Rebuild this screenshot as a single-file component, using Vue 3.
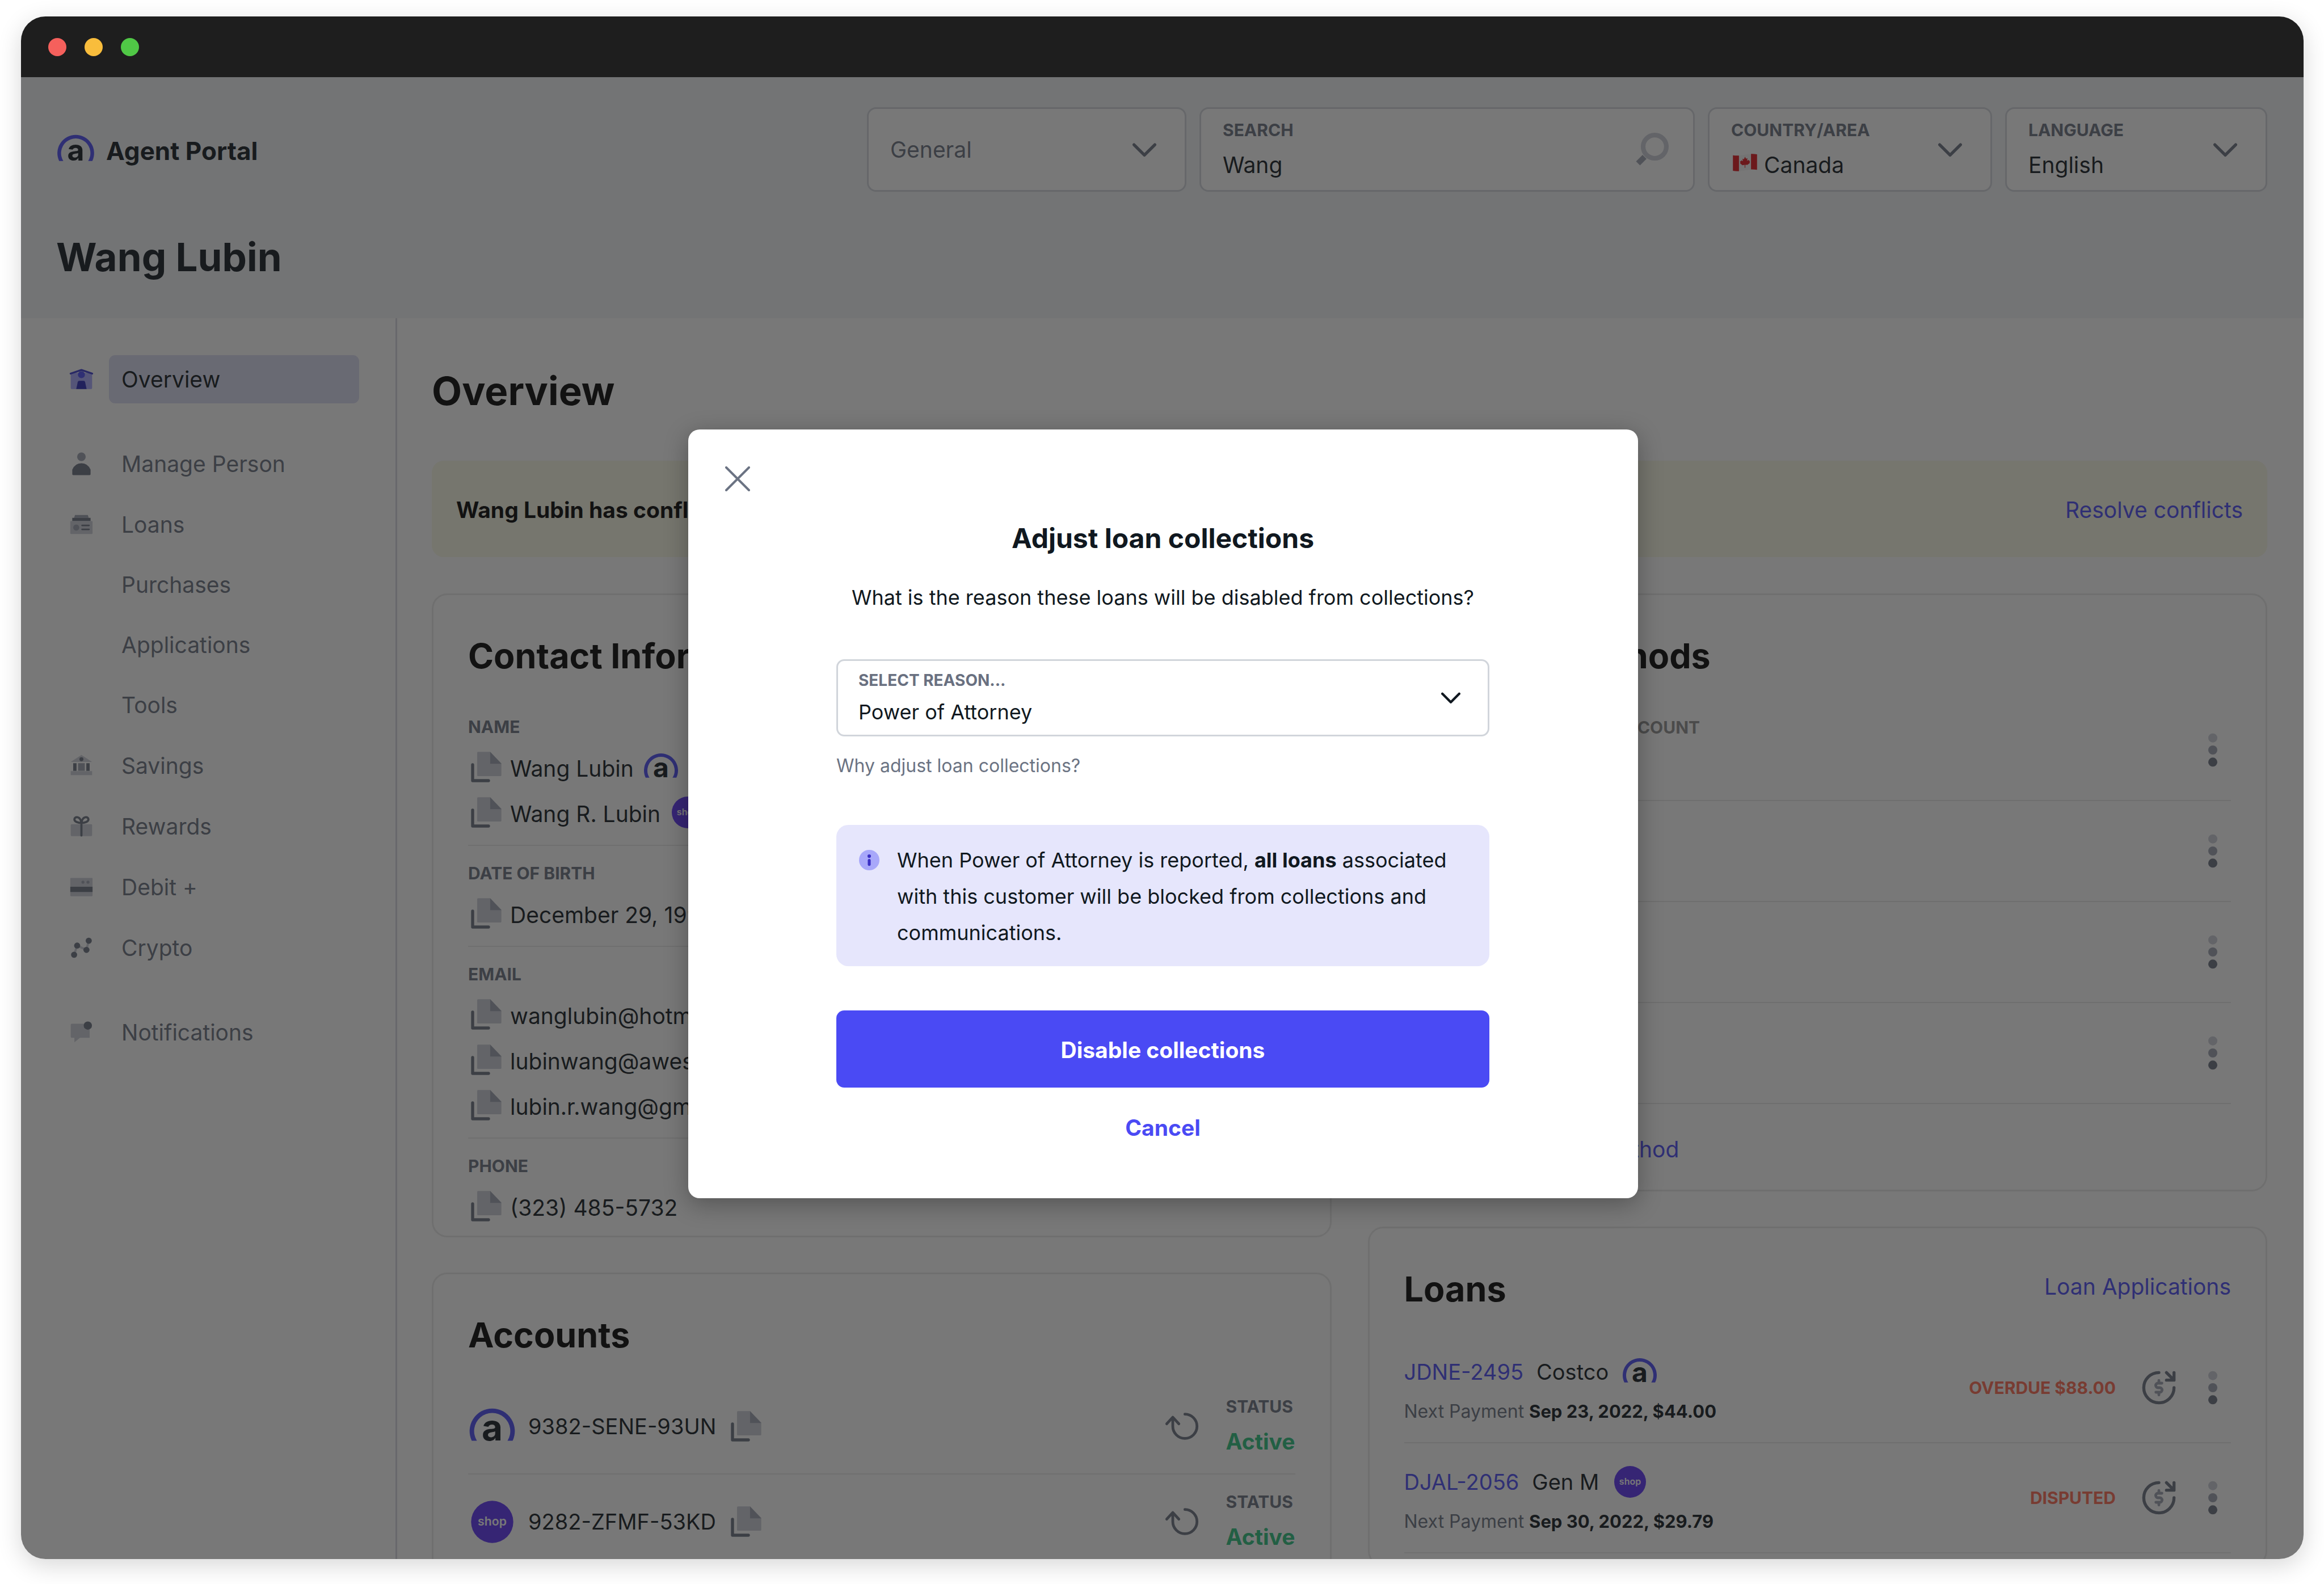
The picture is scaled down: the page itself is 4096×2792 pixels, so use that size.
<script setup>
import { h, ref } from 'vue'

const scope = ref('General')
const query = ref('Wang')
const country = ref('Canada')
const language = ref('English')
const reason = ref('Power of Attorney')

const nav = [
  { label: 'Overview', icon: 'home', active: true },
  { label: 'Manage Person', icon: 'person', spaced: true },
  { label: 'Loans', icon: 'loans', children: ['Purchases', 'Applications', 'Tools'] },
  { label: 'Savings', icon: 'savings' },
  { label: 'Rewards', icon: 'rewards' },
  { label: 'Debit +', icon: 'debit' },
  { label: 'Crypto', icon: 'crypto' },
  { label: 'Notifications', icon: 'notifications', spaced: true },
]

const contact = [
  { label: 'Name', rows: [{ text: 'Wang Lubin', brand: 'a' }, { text: 'Wang R. Lubin', brand: 'shop' }] },
  { label: 'Date of birth', rows: [{ text: 'December 29, 1990' }] },
  { label: 'Email', rows: [{ text: 'wanglubin@hotmail.com' }, { text: 'lubinwang@awesome.com' }, { text: 'lubin.r.wang@gmail.com' }] },
  { label: 'Phone', rows: [{ text: '(323) 485-5732' }] },
]

const accounts = [
  { id: '9382-SENE-93UN', brand: 'a' },
  { id: '9282-ZFMF-53KD', brand: 'shop' },
]

const methods = ['Primary stored bank account', '', '', '']

const loans = [
  { id: 'JDNE-2495', merchant: 'Costco', brand: 'a', next: 'Sep 23, 2022, $44.00', state: 'Overdue $88.00' },
  { id: 'DJAL-2056', merchant: 'Gen M', brand: 'shop', next: 'Sep 30, 2022, $29.79', state: 'Disputed' },
]

const svg = (box, cls, kids) => h('svg', { viewBox: `0 0 ${box} ${box}`, class: cls, fill: 'none', 'aria-hidden': 'true' }, kids)
const p = (d, attrs) => h('path', { d, ...attrs })
const c = (cx, cy, r, fill) => h('circle', { cx, cy, r, fill })

const LIGHT = '#cacdd6'
const MID = '#9ba1b0'
const DARK = '#697080'
const round = { 'stroke-linecap': 'round', 'stroke-linejoin': 'round' }

const Brand = (props) =>
  props.name === 'shop'
    ? svg(32, 'brand', [
        c(16, 16, 14, '#5a31f4'),
        h('text', { x: 16, y: 18.4, 'text-anchor': 'middle', fill: '#ffffff', 'font-size': 8, 'font-weight': 600 }, 'shop'),
      ])
    : svg(32, 'brand', [
        p('M2.43 25.4A15 15 0 1 1 29.57 25.4H26.15A12 12 0 1 0 5.85 25.4Z', { fill: '#4a4af4' }),
        h('text', { x: 16, y: 25.2, 'text-anchor': 'middle', fill: '#101820', 'font-size': 24, 'font-weight': 700 }, 'a'),
      ])
Brand.props = ['name']

const Chevron = () => svg(16, 'chevron', [p('M1 4.6L8 11.6L15 4.6', { stroke: 'currentColor', 'stroke-width': 2, ...round })])

const Copy = () =>
  svg(24, 'copy', [
    p('M3 10.5V21H13.5', { stroke: DARK, 'stroke-width': 2, ...round }),
    p('M6.6 2H14.6L22 9.6V17.4Q22 18 21.4 18H6.6Q6 18 6 17.4V2.6Q6 2 6.6 2Z', { fill: LIGHT }),
    p('M14.6 2L22 9.8H14.6Z', { fill: MID }),
  ])

const Kebab = () => svg(24, 'kebab', [c(12, 4, 3, LIGHT), c(12, 12, 3, MID), c(12, 20, 3, DARK)])

const Refresh = () =>
  svg(24, 'refresh', [p('M14 4A8 8 0 1 1 6 12V6.4M2 10.4L6 6L10 10.4', { stroke: DARK, 'stroke-width': 1.8, ...round })])

const Refund = () =>
  svg(24, 'refund', [
    p('M12 2A10 10 0 1 0 22 12', { stroke: DARK, 'stroke-width': 2, ...round }),
    p('M17 2L21.6 6.6M22 2V7H17', { stroke: DARK, 'stroke-width': 2, ...round }),
    p('M14 9H11.4A1.5 1.5 0 0 0 11.4 12H12.6A1.5 1.5 0 0 1 12.6 15H10M12 7.2V9M12 15V16.8', { stroke: MID, 'stroke-width': 1.8, ...round }),
  ])

const navShapes = {
  home: () => [
    p('M1.6 3.8H14.4Q15 3.8 15 4.4V13.8Q15 14.4 14.4 14.4H1.6Q1 14.4 1 13.8V4.4Z', { fill: '#a7a7ff' }),
    p('M.9 4.3L8 1.9L15.1 4.3', { stroke: '#3838d0', 'stroke-width': 1.2, ...round }),
    c(8, 5, 2.3, '#4a4af4'),
    p('M6.4 9H9.6Q10.2 9 10.4 9.8L11.4 14.4H4.6L5.6 9.8Q5.8 9 6.4 9Z', { fill: '#2a2ab8' }),
  ],
  person: () => [c(8, 3.4, 2.8, MID), p('M2 14.8V11.8Q3.8 7.6 8 7.6T14 11.8V14.8Q14 15.4 13.4 15.4H2.6Q2 15.4 2 14.8Z', { fill: DARK })],
  loans: () => [
    p('M3.8 1.8H12.2L12.8 3.6H3.2Z', { fill: MID }),
    p('M2 3.6H14V5.8H2Z', { fill: DARK }),
    p('M1.2 5.8H14.8Q15.3 5.8 15.3 6.3V13.7Q15.3 14.2 14.8 14.2H1.2Q.7 14.2 .7 13.7V6.3Q.7 5.8 1.2 5.8Z', { fill: LIGHT }),
    c(4.6, 10, 2, MID),
    p('M8.4 8.6H13M8.4 11.2H13', { stroke: DARK, 'stroke-width': 1, ...round }),
  ],
  savings: () => [
    p('M1 5.6L8 1L15 5.6Z', { fill: LIGHT }),
    c(8, 3.8, 1.3, DARK),
    p('M2.6 6.4H4.8V11.4H2.6ZM11.2 6.4H13.4V11.4H11.2Z', { fill: DARK }),
    p('M5.8 6.4H10.2V11.4H5.8Z', { fill: MID }),
    p('M1 11.6H15V14.2H1Z', { fill: LIGHT }),
  ],
  rewards: () => [
    p('M1.6 6.6H14.4Q15 6.6 15 7.2V13.8Q15 14.4 14.4 14.4H1.6Q1 14.4 1 13.8V7.2Q1 6.6 1.6 6.6Z', { fill: LIGHT }),
    p('M8 5.8V14M8 5.8C7.4 1 3.4 1.4 3.4 3.4C3.4 5 6 5.8 8 5.8C8.6 1 12.6 1.4 12.6 3.4C12.6 5 10 5.8 8 5.8', { stroke: DARK, 'stroke-width': 1.4, ...round }),
  ],
  debit: () => [
    p('M1.2 2H14.8Q15.3 2 15.3 2.5V13.5Q15.3 14 14.8 14H1.2Q.7 14 .7 13.5V2.5Q.7 2 1.2 2Z', { fill: LIGHT }),
    p('M.7 7.8H15.3V11.3H.7Z', { fill: DARK }),
    c(9, 4.8, 1, MID),
    c(12.3, 4.8, 1, MID),
  ],
  crypto: () => [
    p('M3.2 12.6L5.2 6.6L11.3 9.4L12.8 3.4', { stroke: LIGHT, 'stroke-width': 1.4 }),
    c(3.2, 12.6, 2, DARK),
    c(5.2, 6.6, 2, DARK),
    c(11.3, 9.4, 2, DARK),
    c(12.8, 3.4, 2, DARK),
  ],
  notifications: () => [
    p('M1.6 2.4H13.4V11.6H7L3.4 14.6V11.6H1.6Q1 11.6 1 11V3Q1 2.4 1.6 2.4Z', { fill: LIGHT }),
    c(12.2, 3.6, 2.7, DARK),
  ],
}
const NavIcon = (props) => svg(16, 'nav-icon', navShapes[props.name]())
NavIcon.props = ['name']
</script>

<template>
  <div class="page">
    <div class="window">
      <div class="titlebar">
        <span class="light red"></span>
        <span class="light amber"></span>
        <span class="light green"></span>
      </div>

      <div class="viewport">
        <header class="header">
          <div class="topbar">
            <a class="logo" href="#">
              <Brand name="a" />
              <span>Agent Portal</span>
            </a>
            <form class="filters" @submit.prevent>
              <label class="field muted">
                <span class="field-text">
                  <select v-model="scope" aria-label="Scope">
                    <option>General</option>
                  </select>
                </span>
                <Chevron />
              </label>
              <label class="field search">
                <span class="field-text">
                  <span class="caption">Search</span>
                  <input v-model="query" type="text" />
                </span>
                <svg class="magnifier" viewBox="0 0 22 22" fill="none" aria-hidden="true">
                  <circle cx="13" cy="9" r="7.5" stroke="#cacdd6" stroke-width="3" />
                  <path d="M6.4 15.6L2.2 19.8" stroke="#9ba1b0" stroke-width="3.6" />
                </svg>
              </label>
              <label class="field">
                <span class="field-text">
                  <span class="caption">Country/Area</span>
                  <span class="with-flag">
                    <svg class="flag" viewBox="0 0 48 35" aria-hidden="true">
                      <path d="M0 3Q10 5 24 2T48 1V32Q38 30 24 33T0 34Z" fill="#f4f4f4" />
                      <path d="M0 3Q6 4 12 3.6V34.6Q6 35 0 34Z" fill="#e0121a" />
                      <path d="M36 .2Q42 0 48 1V32Q42 31 36 31Z" fill="#e0121a" />
                      <path d="M24 6L26 10L29 9L28 14L31 12L32 14L34 14L33 17L34 18L29 22L24.6 22V28H23.4V22L19 23L14 19L15 18L14 15L16 15L17 13L20 15L19 10L22 11Z" fill="#e0121a" />
                    </svg>
                    <select v-model="country">
                      <option>Canada</option>
                    </select>
                  </span>
                </span>
                <Chevron />
              </label>
              <label class="field">
                <span class="field-text">
                  <span class="caption">Language</span>
                  <select v-model="language">
                    <option>English</option>
                  </select>
                </span>
                <Chevron />
              </label>
            </form>
          </div>
          <h1 class="page-title">Wang Lubin</h1>
        </header>

        <div class="body">
          <nav class="sidebar">
            <ul class="nav">
              <li v-for="item in nav" :key="item.label" :class="{ spaced: item.spaced }">
                <a class="nav-link" :class="{ active: item.active }" href="#">
                  <NavIcon :name="item.icon" />
                  <span class="nav-text">{{ item.label }}</span>
                </a>
                <ul v-if="item.children" class="subnav">
                  <li v-for="child in item.children" :key="child">
                    <a class="nav-link" href="#"><span class="nav-text">{{ child }}</span></a>
                  </li>
                </ul>
              </li>
            </ul>
          </nav>

          <main class="main">
            <h2 class="page-title">Overview</h2>
            <div class="banner">
              <strong>Wang Lubin has conflicts</strong>
              <a class="link" href="#">Resolve conflicts</a>
            </div>

            <div class="columns">
              <div class="column">
                <section class="card">
                  <h3 class="card-title">Contact Information</h3>
                  <div class="contact">
                    <div v-for="group in contact" :key="group.label" class="group">
                      <div class="caption">{{ group.label }}</div>
                      <ul class="values">
                        <li v-for="row in group.rows" :key="row.text" class="value">
                          <Copy />
                          <span class="value-text">{{ row.text }}</span>
                          <Brand v-if="row.brand" :name="row.brand" />
                        </li>
                      </ul>
                    </div>
                  </div>
                </section>

                <section class="card">
                  <h3 class="card-title">Accounts</h3>
                  <ul class="rows">
                    <li v-for="account in accounts" :key="account.id" class="row account">
                      <Brand :name="account.brand" class="large" />
                      <span class="account-id">{{ account.id }}</span>
                      <Copy />
                      <span class="grow"></span>
                      <Refresh />
                      <span class="status">
                        <span class="caption">Status</span>
                        <span class="status-value">Active</span>
                      </span>
                    </li>
                  </ul>
                </section>
              </div>

              <div class="column">
                <section class="card">
                  <h3 class="card-title">Payment Methods</h3>
                  <ul class="rows">
                    <li v-for="(label, i) in methods" :key="i" class="row method">
                      <span class="caption neutral">{{ label }}</span>
                      <button class="icon-button" type="button" aria-label="More actions"><Kebab /></button>
                    </li>
                  </ul>
                  <a class="link add" href="#">Add new payment method</a>
                </section>

                <section class="card">
                  <div class="card-head">
                    <h3 class="card-title">Loans</h3>
                    <a class="link" href="#">Loan Applications</a>
                  </div>
                  <ul class="rows">
                    <li v-for="loan in loans" :key="loan.id" class="row loan">
                      <div class="loan-text">
                        <div class="loan-name">
                          <a class="link" href="#">{{ loan.id }}</a>
                          <span>{{ loan.merchant }}</span>
                          <Brand :name="loan.brand" />
                        </div>
                        <div class="loan-next">Next Payment <strong>{{ loan.next }}</strong></div>
                      </div>
                      <span class="grow"></span>
                      <span class="loan-state">{{ loan.state }}</span>
                      <button class="icon-button refund-button" type="button" aria-label="Refund"><Refund /></button>
                      <button class="icon-button" type="button" aria-label="More actions"><Kebab /></button>
                    </li>
                  </ul>
                </section>
              </div>
            </div>
          </main>
        </div>

        <div class="overlay">
          <div class="modal" role="dialog" aria-modal="true" aria-labelledby="modal-title">
            <button class="close" type="button" aria-label="Close">
              <svg viewBox="0 0 44 44" aria-hidden="true">
                <path d="M2 2L42 42M42 2L2 42" stroke="#6b7383" stroke-width="4" stroke-linecap="round" />
              </svg>
            </button>
            <div class="modal-body">
              <h2 id="modal-title" class="modal-title">Adjust loan collections</h2>
              <p class="question">What is the reason these loans will be disabled from collections?</p>
              <label class="field reason">
                <span class="field-text">
                  <span class="caption">Select reason...</span>
                  <select v-model="reason">
                    <option>Power of Attorney</option>
                  </select>
                </span>
                <Chevron />
              </label>
              <a class="why" href="#">Why adjust loan collections?</a>
              <div class="info">
                <svg class="info-icon" viewBox="0 0 14 14" aria-hidden="true">
                  <circle cx="7" cy="7" r="7" fill="#a8a8fa" />
                  <circle cx="7" cy="4.3" r="1.2" fill="#3a2fc4" />
                  <path d="M7 7.2V10" stroke="#3a2fc4" stroke-width="2" stroke-linecap="round" />
                </svg>
                <p>When Power of Attorney is reported, <strong>all loans</strong> associated with this customer will be blocked from collections and communications.</p>
              </div>
              <button class="primary" type="button">Disable collections</button>
              <button class="cancel" type="button">Cancel</button>
            </div>
          </div>
        </div>
      </div>
    </div>
  </div>
</template>

<style>
html,
body {
  background: #ffffff;
}
.brand {
  width: 64px;
  height: 64px;
  flex: none;
  font-family: Inter, "Liberation Sans", sans-serif;
}
.brand.large {
  width: 85px;
  height: 85px;
}
.chevron {
  width: 42px;
  height: 42px;
  flex: none;
  color: #697080;
}
.copy,
.kebab,
.refresh,
.refund {
  display: block;
  width: 64px;
  height: 64px;
  flex: none;
}
.nav-icon {
  width: 43px;
  height: 43px;
  flex: none;
}
</style>

<style scoped>
.page {
  box-sizing: border-box;
  height: 100vh;
  padding: 29px 36px 44px 37px;
  font-family: Inter, "Liberation Sans", sans-serif;
  font-size: 39px;
  line-height: 56px;
  color: #101820;
}
.page *,
.page *::before {
  box-sizing: border-box;
}
h1,
h2,
h3,
p,
ul {
  margin: 0;
  padding: 0;
}
ul {
  list-style: none;
}
a {
  color: inherit;
  text-decoration: none;
}
button,
select,
input {
  appearance: none;
  margin: 0;
  padding: 0;
  border: 0;
  outline: 0;
  background: none;
  font: inherit;
  color: inherit;
}
strong {
  font-weight: 700;
}

.window {
  display: flex;
  flex-direction: column;
  height: 100%;
  border-radius: 43px;
  overflow: hidden;
  box-shadow: 0 11px 43px rgba(0, 0, 0, 0.16);
}
.titlebar {
  display: flex;
  align-items: center;
  gap: 32px;
  flex: none;
  height: 107px;
  padding: 0 48px;
  background: #1e1e1e;
}
.light {
  width: 32px;
  height: 32px;
  border-radius: 50%;
}
.red {
  background: #f5605c;
}
.amber {
  background: #f9bd3c;
}
.green {
  background: #50c846;
}

.viewport {
  position: relative;
  display: flex;
  flex-direction: column;
  flex: 1;
  min-height: 0;
  overflow: hidden;
  background: #ffffff;
}
.header {
  flex: none;
  padding: 53px 64px 65px 62px;
  background: #f2f5f8;
}
.topbar {
  display: flex;
  align-items: center;
  justify-content: space-between;
  margin-bottom: 73px;
}
.logo {
  display: flex;
  align-items: center;
  gap: 19px;
  font-size: 44px;
  font-weight: 700;
}
.logo span {
  padding-top: 4px;
}
.logo .brand {
  width: 69px;
  height: 69px;
}
.filters {
  display: grid;
  grid-template-columns: 563px 873px 501px 462px;
  gap: 23px;
}
.field {
  display: flex;
  align-items: center;
  justify-content: space-between;
  height: 149px;
  padding: 0 50px 0 38px;
  border: 3px solid #d1d5db;
  border-radius: 16px;
  background: #ffffff;
}
.field-text {
  display: flex;
  flex-direction: column;
  gap: 14px;
  flex: 1;
  min-width: 0;
}
.field select,
.field input {
  width: 100%;
  height: 56px;
}
.search {
  padding-right: 43px;
}
.muted {
  color: #697080;
}
.magnifier {
  width: 60px;
  height: 60px;
  flex: none;
}
.with-flag {
  display: flex;
  align-items: flex-start;
  gap: 12px;
  padding-left: 3px;
}
.flag {
  width: 43px;
  height: 31px;
  margin-top: 8px;
  flex: none;
}
.caption {
  font-size: 30px;
  line-height: 40px;
  font-weight: 700;
  text-transform: uppercase;
  color: #697080;
}
.neutral {
  color: #8f8f8f;
}
.page-title {
  font-size: 69px;
  line-height: 85px;
  font-weight: 700;
}

.body {
  display: flex;
  flex: 1;
  min-height: 0;
}
.sidebar {
  flex: none;
  width: 663px;
  padding: 65px 64px 0 85px;
  border-right: 3px solid #d8d8e0;
}
.nav {
  display: flex;
  flex-direction: column;
  gap: 22px;
}
.spaced {
  margin-top: 42px;
}
.nav-link {
  display: flex;
  align-items: center;
  gap: 27px;
  color: #697080;
}
.nav-text {
  flex: 1;
  padding-left: 22px;
  border-radius: 11px;
  line-height: 85px;
}
.active .nav-text {
  background: #dadbf2;
  color: #101820;
}
.subnav {
  display: flex;
  flex-direction: column;
  gap: 21px;
  margin-top: 21px;
  padding-left: 70px;
}

.main {
  flex: 1;
  min-width: 0;
  padding: 86px 64px 0 61px;
}
.main .page-title,
.card-title,
.banner strong {
  color: #000000;
}
.banner {
  display: flex;
  align-items: center;
  justify-content: space-between;
  height: 170px;
  margin: 80px 0 64px;
  padding: 3px 43px 0;
  border-radius: 21px;
  background: #f9f9e6;
}
.link {
  color: #4a4af4;
}
.columns {
  display: grid;
  grid-template-columns: 1fr 1fr;
  gap: 64px;
}
.column {
  display: flex;
  flex-direction: column;
  gap: 62px;
}
.card {
  padding: 67px 61px 20px;
  border: 3px solid #e8e8e8;
  border-radius: 27px;
}
.card-title {
  font-size: 61px;
  line-height: 80px;
  font-weight: 700;
}
.contact {
  padding-top: 37px;
}
.group {
  padding: 26px 0 25px;
  border-bottom: 2px solid #e8e8e8;
}
.group:last-child {
  padding-bottom: 0;
  border-bottom: 0;
}
.group .caption {
  line-height: 44px;
}
.values {
  display: flex;
  flex-direction: column;
  gap: 16px;
  margin-top: 17px;
}
.value {
  display: flex;
  align-items: center;
  gap: 10px;
  height: 64px;
}
.value-text {
  padding: 6px 6px 0 0;
}
.rows {
  padding-top: 38px;
}
.row {
  display: flex;
  align-items: center;
  border-bottom: 2px solid #e8e8e8;
}
.grow {
  flex: 1;
}
.account {
  height: 168px;
}
.account-id {
  padding: 0 21px;
  font-size: 38px;
}
.status {
  display: flex;
  flex-direction: column;
  gap: 14px;
  margin-left: 46px;
}
.status-value {
  font-weight: 700;
  color: #2ac07d;
}
.method {
  justify-content: space-between;
  height: 178px;
}
.method .caption {
  align-self: flex-start;
  margin-top: 28px;
}
.icon-button {
  width: 64px;
  height: 64px;
}
.add {
  display: block;
  margin: 52px 0 23px;
}
.card-head {
  display: flex;
  align-items: flex-start;
  justify-content: space-between;
}
.card-head .link {
  padding-top: 8px;
}
.loan {
  height: 194px;
}
.loan-text {
  padding-top: 6px;
}
.loan-name {
  display: flex;
  align-items: center;
  gap: 23px;
  height: 64px;
  font-size: 38px;
}
.loan-next {
  margin-top: 14px;
  font-size: 32px;
  line-height: 48px;
  color: #697080;
}
.loan-next strong {
  font-size: 31px;
  color: #101820;
}
.loan-state {
  font-size: 30px;
  font-weight: 700;
  text-transform: uppercase;
  color: #ff6950;
}
.refund-button {
  margin: 0 31px 0 44px;
}

.overlay {
  position: absolute;
  inset: 0;
  display: flex;
  align-items: center;
  justify-content: center;
  padding: 0 0 15px 2px;
  background: rgba(30, 30, 30, 0.6);
}
.modal {
  width: 1674px;
  padding: 65px 65px 92px;
  border-radius: 20px;
  background: #ffffff;
  box-shadow: 0 10px 43px rgba(0, 0, 0, 0.3);
  font-size: 36px;
}
.close {
  display: block;
  width: 44px;
  height: 44px;
}
.close svg {
  display: block;
}
.modal-body {
  display: flex;
  flex-direction: column;
  width: 1151px;
  margin: 51px auto 0;
}
.modal-title {
  font-size: 48px;
  line-height: 64px;
  font-weight: 700;
  text-align: center;
}
.question {
  margin: 40px 0 77px;
  line-height: 64px;
  text-align: center;
}
.reason {
  height: 136px;
  padding: 0 48px 0 36px;
  border-radius: 14px;
}
.reason .field-text {
  gap: 8px;
  padding-bottom: 5px;
}
.reason .caption {
  font-size: 28px;
}
.reason select {
  height: 50px;
}
.reason .chevron {
  width: 34px;
  height: 34px;
  color: #101820;
}
.why {
  margin: 28px 0 80px;
  font-size: 32px;
  line-height: 48px;
  color: #6b7383;
}
.info {
  display: flex;
  gap: 31px;
  padding: 30px 40px 27px;
  border-radius: 21px;
  background: #e6e6fc;
  line-height: 64px;
}
.info-icon {
  width: 36px;
  height: 36px;
  margin-top: 14px;
  flex: none;
}
.primary {
  height: 136px;
  margin: 78px 0 39px;
  padding-top: 3px;
  border-radius: 14px;
  background: #4a4af4;
  font-size: 39px;
  font-weight: 700;
  text-align: center;
  color: #ffffff;
}
.cancel {
  align-self: center;
  font-size: 39px;
  line-height: 64px;
  font-weight: 700;
  color: #4a4af4;
}
</style>
